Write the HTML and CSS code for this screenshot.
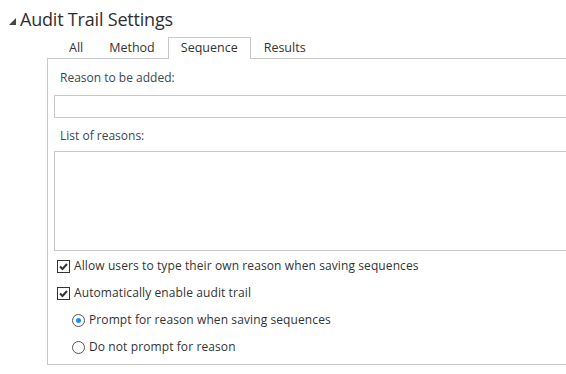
FILE: index.html
```html
<!DOCTYPE html>
<html>
<head>
<meta charset="utf-8">
<link rel="stylesheet" href="styles.css">
</head>
<body>
<div class="page">
  <div class="header">
    <svg class="caret" width="7" height="7" viewBox="0 0 7 7"><polygon points="7,0 7,7 0,7" fill="#454545"/></svg>
    <span class="title">Audit Trail Settings</span>
  </div>
  <div class="tabs">
    <div class="tab">All</div>
    <div class="tab">Method</div>
    <div class="tab active">Sequence</div>
    <div class="tab">Results</div>
  </div>
  <div class="panel">
    <div class="label">Reason to be added:</div>
    <div class="input"></div>
    <div class="label label-list">List of reasons:</div>
    <div class="listbox"></div>
    <div class="options">
      <div class="row">
        <span class="checkbox"><svg width="11" height="11" viewBox="0 0 11 11"><path d="M2 5.5 L4.5 8 L9 3" fill="none" stroke="#333" stroke-width="2"/></svg></span>
        <span class="text">Allow users to type their own reason when saving sequences</span>
      </div>
      <div class="row">
        <span class="checkbox"><svg width="11" height="11" viewBox="0 0 11 11"><path d="M2 5.5 L4.5 8 L9 3" fill="none" stroke="#333" stroke-width="2"/></svg></span>
        <span class="text">Automatically enable audit trail</span>
      </div>
      <div class="row sub">
        <span class="radio on"></span>
        <span class="text">Prompt for reason when saving sequences</span>
      </div>
      <div class="row sub">
        <span class="radio"></span>
        <span class="text">Do not prompt for reason</span>
      </div>
    </div>
  </div>
</div>
</body>
</html>
```
FILE: styles.css
```css
html, body {
  margin: 0;
  padding: 0;
  background: #ffffff;
  overflow: hidden;
}
.page {
  width: 566px;
  height: 374px;
  overflow: hidden;
  font-family: "Open Sans", "Noto Sans", sans-serif;
  color: #3b3b3b;
}
.header {
  display: flex;
  align-items: flex-start;
  padding: 7px 0 0 9px;
  height: 24px;
}
.caret {
  margin-top: 11px;
  margin-right: 4px;
  flex: none;
}
.title {
  font-size: 18px;
  letter-spacing: -0.2px;
  line-height: 24px;
  color: #2f2f2f;
}
.tabs {
  display: flex;
  margin: 6px 0 0 56px;
  position: relative;
  z-index: 1;
}
.tab {
  font-size: 12.5px;
  line-height: 17px;
  padding: 1px 12px 3px;
  border: 1px solid transparent;
  border-bottom: none;
  margin-bottom: -1px;
  color: #333;
}
.tab.active {
  border-color: #c9c9cc;
  background: #fff;
}
.panel {
  margin-left: 47px;
  width: 560px;
  border: 1px solid #c9c9cc;
  border-right: none;
  padding: 11px 0 9px 6px;
  box-sizing: border-box;
}
.label {
  font-size: 12px;
  line-height: 16px;
  padding-left: 6px;
  color: #3d4654;
}
.label-list {
  margin-top: 10px;
}
.input {
  margin-top: 9px;
  height: 23px;
  border: 1px solid #c9c9cc;
  box-sizing: border-box;
  width: 530px;
}
.listbox {
  margin-top: 7px;
  height: 100px;
  border: 1px solid #c9c9cc;
  box-sizing: border-box;
  width: 530px;
}
.options {
  margin-top: 7px;
  display: flex;
  flex-direction: column;
  gap: 11px;
}
.row {
  display: flex;
  align-items: flex-start;
  padding-left: 3px;
  height: 16px;
}
.row.sub {
  padding-left: 18px;
}
.text {
  font-size: 12px;
  letter-spacing: 0.1px;
  line-height: 16px;
  color: #333;
}
.checkbox {
  width: 13px;
  height: 13px;
  box-sizing: border-box;
  border: 1px solid #333;
  margin-top: 2px;
  margin-right: 4px;
  display: flex;
  align-items: center;
  justify-content: center;
  flex: none;
}
.checkbox svg {
  display: block;
}
.radio {
  width: 13px;
  height: 13px;
  box-sizing: border-box;
  border: 1px solid #555;
  border-radius: 50%;
  margin-top: 2px;
  margin-right: 4px;
  flex: none;
  display: flex;
  align-items: center;
  justify-content: center;
}
.radio.on::after {
  content: "";
  width: 5px;
  height: 5px;
  border-radius: 50%;
  background: #1a8cff;
}
```
